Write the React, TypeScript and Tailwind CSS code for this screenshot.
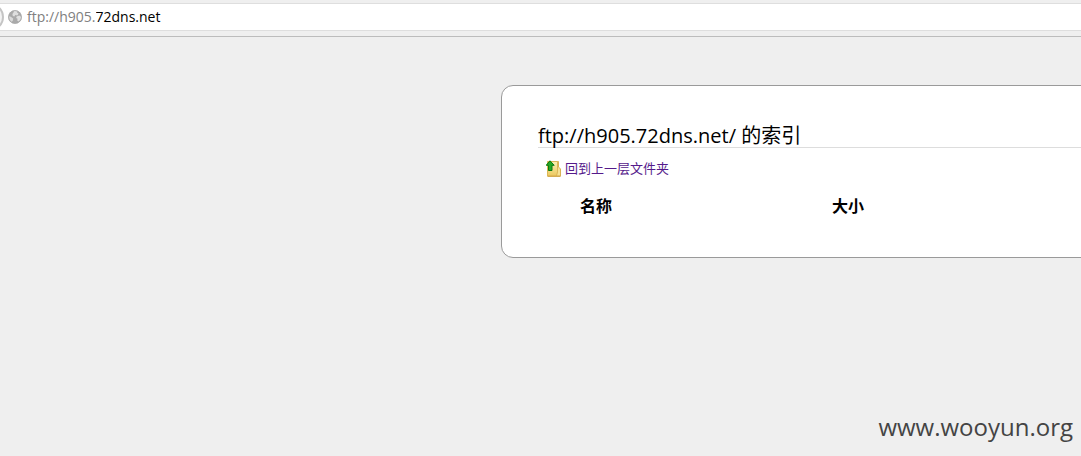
function GlobeIcon() {
  return (
    <svg width="14" height="14" viewBox="0 0 14 14" aria-hidden="true" className="shrink-0">
      <circle cx="7" cy="7" r="6.8" fill="#aaaaaa" />
      <path d="M6 .8 9.5 1.2 9 2.6 10.6 3.6 9.4 5.4 7.2 5 6.4 6.4 4.8 6 4.4 4 5.4 2.8Z" fill="#dedede" />
      <path d="M.8 6.2 2.8 6.8 5.2 8.6 4.8 10.6 3.8 12 1.6 10Z" fill="#dadada" />
      <path d="M8.6 6.6 11.4 5.6 13.2 7 12.6 9.6 10.8 11.6 9.2 10.6 9.6 8.8 8.2 8Z" fill="#e0e0e0" />
      <circle cx="7" cy="7" r="6.4" fill="none" stroke="#a8a8a8" strokeWidth=".7" />
    </svg>
  );
}

function FolderUpIcon() {
  return (
    <svg width="16" height="17" viewBox="0 0 16 17" aria-hidden="true" className="shrink-0">
      <defs>
        <linearGradient id="folder" x1="0" y1="0" x2="0" y2="1">
          <stop offset="0" stopColor="#f9efb4" />
          <stop offset="1" stopColor="#ecc95f" />
        </linearGradient>
      </defs>
      <path d="M10.500 1.500H12.500V7L14.500 9V16H10.500Z" fill="#f6e193" stroke="#d9b355" />
      <path d="M1.500 1.500H11.500V12L10.500 16H1.500Z" fill="url(#folder)" stroke="#dcb756" />
      <path d="M1.500 16.300H14.500" stroke="#cfa13c" />
      <path d="M4 .8 8.200 5.300H6V10.500H2.500V5.300H.2Z" fill="#27a823" stroke="#087a10" strokeLinejoin="round" />
    </svg>
  );
}

export default function App() {
  return (
    <div className="flex min-h-screen flex-col overflow-x-hidden bg-[#efefef] font-['Open_Sans','Noto_Sans_CJK_SC',sans-serif] text-black">
      <header className="border-b border-[#bcbcbc] bg-[#efefef] pt-[3px] pb-[5px]">
        <div className="flex h-7 items-center overflow-hidden border-y border-[#dedede] bg-white text-sm">
          <span className="-ml-6 mr-1 size-7 shrink-0 rounded-full border-2 border-[#c4c4c4] bg-[#f3f3f3]" />
          <GlobeIcon />
          <label htmlFor="address" className="ml-[5px] text-[#808080]">
            ftp://h905.
          </label>
          <input
            id="address"
            type="text"
            defaultValue="72dns.net"
            className="min-w-0 flex-1 bg-transparent outline-none"
          />
        </div>
      </header>

      <main className="-mr-10 ml-[501px] mt-12 rounded-xl border border-[#9a9a9a] bg-white px-9 pt-[38px] pb-[39px]">
        <h1 className="border-b border-[#dddddd] text-xl leading-[23px]">ftp://h905.72dns.net/ 的索引</h1>
        <a href="#up" className="ml-2 mt-[11px] flex w-fit items-center gap-[3px] text-[13px] leading-[18px] text-[#551a8b]">
          <FolderUpIcon />
          回到上一层文件夹
        </a>
        <table className="mt-[17px] w-full table-fixed text-left text-base leading-6">
          <thead>
            <tr>
              <th className="w-[294px] pl-[42px] font-bold">名称</th>
              <th className="font-bold">大小</th>
            </tr>
          </thead>
        </table>
      </main>

      <footer className="mt-auto px-2 pb-[13px] text-right text-2xl text-[#444444]">www.wooyun.org</footer>
    </div>
  );
}
